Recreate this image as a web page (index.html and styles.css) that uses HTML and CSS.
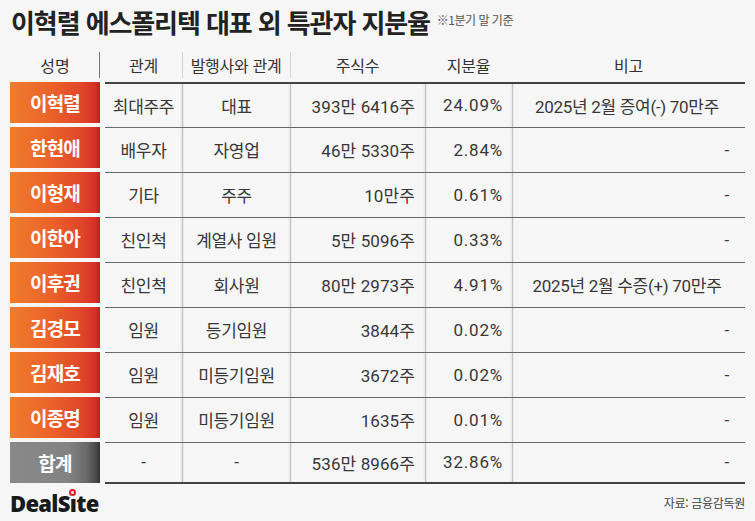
FILE: index.html
```html
<!DOCTYPE html>
<html lang="ko">
<head>
<meta charset="utf-8">
<title>이혁렬 에스폴리텍 대표 외 특관자 지분율</title>
<link rel="stylesheet" href="styles.css">
</head>
<body>
<div class="page">
  <div class="title-row">
    <h1 class="title">이혁렬 에스폴리텍 대표 외 특관자 지분율</h1>
    <span class="note">※1분기 말 기준</span>
  </div>

  <div class="head">
    <div class="h-name">성명</div>
    <div class="h-cells">
      <div class="hc">관계</div>
      <div class="hc sep">발행사와 관계</div>
      <div class="hc sep">주식수</div>
      <div class="hc">지분율</div>
      <div class="hc">비고</div>
    </div>
  </div>

  <div class="rows">
    <div class="row first">
      <div class="name">이혁렬</div>
      <div class="cells">
        <div class="c">최대주주</div><div class="c v">대표</div><div class="c v r">393만 6416주</div><div class="c v r pct">24.09%</div><div class="c v note-c">2025년 2월 증여(-) 70만주</div>
      </div>
    </div>
    <div class="row">
      <div class="name">한현애</div>
      <div class="cells">
        <div class="c">배우자</div><div class="c v">자영업</div><div class="c v r">46만 5330주</div><div class="c v r pct">2.84%</div><div class="c v dash">-</div>
      </div>
    </div>
    <div class="row">
      <div class="name">이형재</div>
      <div class="cells">
        <div class="c">기타</div><div class="c v">주주</div><div class="c v r">10만주</div><div class="c v r pct">0.61%</div><div class="c v dash">-</div>
      </div>
    </div>
    <div class="row">
      <div class="name">이한아</div>
      <div class="cells">
        <div class="c">친인척</div><div class="c v">계열사 임원</div><div class="c v r">5만 5096주</div><div class="c v r pct">0.33%</div><div class="c v dash">-</div>
      </div>
    </div>
    <div class="row">
      <div class="name">이후권</div>
      <div class="cells">
        <div class="c">친인척</div><div class="c v">회사원</div><div class="c v r">80만 2973주</div><div class="c v r pct">4.91%</div><div class="c v note-c">2025년 2월 수증(+) 70만주</div>
      </div>
    </div>
    <div class="row">
      <div class="name">김경모</div>
      <div class="cells">
        <div class="c">임원</div><div class="c v">등기임원</div><div class="c v r">3844주</div><div class="c v r pct">0.02%</div><div class="c v dash">-</div>
      </div>
    </div>
    <div class="row">
      <div class="name">김재호</div>
      <div class="cells">
        <div class="c">임원</div><div class="c v">미등기임원</div><div class="c v r">3672주</div><div class="c v r pct">0.02%</div><div class="c v dash">-</div>
      </div>
    </div>
    <div class="row">
      <div class="name">이종명</div>
      <div class="cells">
        <div class="c">임원</div><div class="c v">미등기임원</div><div class="c v r">1635주</div><div class="c v r pct">0.01%</div><div class="c v dash">-</div>
      </div>
    </div>
    <div class="row last">
      <div class="name total">합계</div>
      <div class="cells">
        <div class="c">-</div><div class="c v">-</div><div class="c v r">536만 8966주</div><div class="c v r pct">32.86%</div><div class="c v dash">-</div>
      </div>
    </div>
  </div>

  <div class="footer">
    <div class="logo">DealS<span class="i">ı<span class="dot"></span></span>te</div>
    <div class="source">자료: 금융감독원</div>
  </div>
</div>
</body>
</html>
```

FILE: styles.css
```css
* { box-sizing: border-box; }
html, body {
  margin: 0;
  padding: 0;
  background: #f6f6f6;
}
body {
  font-family: "Roboto", "Noto Sans CJK KR", sans-serif;
  color: #333;
}
.page {
  width: 755px;
  height: 521px;
  padding: 0 10px 0 10px;
}
.title-row {
  display: flex;
  align-items: baseline;
  gap: 7px;
  height: 48px;
  padding-top: 5px;
}
.title {
  margin: 0;
  font-family: "Noto Sans CJK KR", sans-serif;
  font-size: 26px;
  font-weight: 700;
  letter-spacing: -1.1px;
  color: #222;
  line-height: 34px;
  padding-left: 1px;
}
.note {
  font-family: "Noto Sans CJK KR", sans-serif;
  font-size: 12px;
  color: #555;
  letter-spacing: -0.5px;
  position: relative;
  top: -8px;
}

/* header */
.head {
  display: flex;
  height: 34px;
}
.h-name {
  width: 90px;
  margin-right: 5px;
  display: flex;
  align-items: center;
  justify-content: center;
  font-family: "Noto Sans CJK KR", sans-serif;
  font-size: 16px;
  color: #333;
  position: relative;
}
.h-name::after {
  content: "";
  position: absolute;
  right: 0;
  top: 4px;
  bottom: 4px;
  width: 1px;
  background: #777;
}
.h-cells {
  flex: 1;
  display: grid;
  grid-template-columns: 77px 108px 135px 87px 1fr;
}
.hc {
  display: flex;
  align-items: center;
  justify-content: center;
  font-family: "Noto Sans CJK KR", sans-serif;
  font-size: 16px;
  color: #333;
  letter-spacing: -0.3px;
  position: relative;
}
.hc.sep::before {
  content: "";
  position: absolute;
  left: 0;
  top: 4px;
  bottom: 4px;
  width: 1px;
  background: #d4d4d4;
}

/* body rows */
.row {
  display: flex;
  height: 45px;
}
.row.last {
  height: 42px;
}
.name {
  width: 90px;
  height: 41px;
  margin-right: 5px;
  display: flex;
  align-items: center;
  justify-content: center;
  font-family: "Noto Sans CJK KR", sans-serif;
  font-size: 19px;
  font-weight: 700;
  color: #fff;
  letter-spacing: -0.8px;
  background: linear-gradient(90deg, #ef7c2c 0%, #eb632a 45%, #e0452a 80%, #d63028 94%, #b72520 100%);
}
.name.total {
  background: linear-gradient(90deg, #898989 0%, #838383 65%, #6a6a6a 85%, #4b4b4b 95%, #333 100%);
}
.cells {
  flex: 1;
  display: grid;
  grid-template-columns: 77px 108px 135px 87px 1fr;
  border-top: 1px solid #6b6b6b;
}
.row.first .cells {
  border-top: 2px solid #444;
}
.row.last .cells {
  border-bottom: 2px solid #444;
}
.c {
  display: flex;
  align-items: center;
  justify-content: center;
  font-size: 17px;
  color: #383838;
  letter-spacing: -0.3px;
  padding-bottom: 1px;
  white-space: nowrap;
}
.c.v {
  border-left: 1px solid #c4c4c4;
  box-shadow: inset 1px 0 1px rgba(0, 0, 0, 0.06), -1px 0 2px rgba(0, 0, 0, 0.08);
}
.c.r {
  justify-content: flex-end;
  padding-right: 10px;
  letter-spacing: 0.1px;
}
.c.pct {
  letter-spacing: 0.8px;
  padding-right: 9px;
}
.c.note-c {
  justify-content: center;
  padding-left: 0;
  padding-right: 4px;
}
.c.dash {
  justify-content: flex-end;
  padding-right: 16px;
}

/* footer */
.footer {
  display: flex;
  justify-content: space-between;
  align-items: center;
  height: 37px;
}
.logo {
  font-family: "Open Sans", "DejaVu Sans", sans-serif;
  font-weight: 800;
  font-size: 22px;
  color: #1a1a1a;
  letter-spacing: -0.7px;
}
.logo .i {
  position: relative;
}
.logo .dot {
  position: absolute;
  left: 50%;
  top: 1px;
  width: 7px;
  height: 7px;
  margin-left: -3.8px;
  border: 2px solid #e02020;
  border-radius: 50%;
}
.source {
  font-family: "Noto Sans CJK KR", sans-serif;
  font-size: 12px;
  color: #444;
  letter-spacing: -0.3px;
}
```
